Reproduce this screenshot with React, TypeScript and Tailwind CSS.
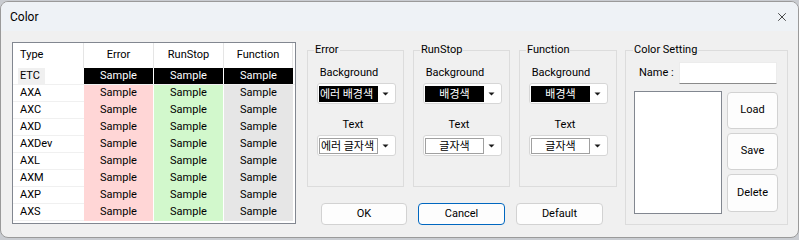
import { X } from 'lucide-react';

const types = ['AXA', 'AXC', 'AXD', 'AXDev', 'AXL', 'AXM', 'AXP', 'AXS'];

function Arrow() {
  return (
    <svg width="7" height="4" viewBox="0 0 7 4" className="shrink-0">
      <path d="M0.5 0.5 L6.5 0.5 L3.5 3.5 Z" fill="#1a1a1a" />
    </svg>
  );
}

function Combo({ text, dark, left }: { text: string; dark?: boolean; left?: boolean }) {
  return (
    <div className="ml-[9px] w-[79px] h-[21px] rounded-[3px] border border-[#d6d6d6] bg-white flex items-center pl-px">
      <div
        className={`w-[59px] h-[16px] flex items-center text-[11px] leading-none font-['Noto_Sans_CJK_KR',sans-serif] ${left ? 'justify-start pl-px' : 'justify-center'} ${dark ? 'bg-black text-white' : 'bg-white text-black border border-[#a0a0a0]'}`}
      >
        {text}
      </div>
      <div className="flex-1 flex justify-center pr-[2px]">
        <Arrow />
      </div>
    </div>
  );
}

function Group({ title, bg, fg, left, w }: { title: string; bg: string; fg: string; left?: boolean; w: string }) {
  return (
    <fieldset className={`${w} border border-[#dcdcdc] pb-[30px]`}>
      <legend className="ml-[6px] px-px leading-[16px]">{title}</legend>
      <div className="mt-[7px] w-[82px] text-center leading-[16px]">Background</div>
      <div className="mt-[2px]">
        <Combo text={bg} dark left={left} />
      </div>
      <div className="mt-[13px] w-[90px] text-center leading-[16px]">Text</div>
      <div className="mt-[2px]">
        <Combo text={fg} left={left} />
      </div>
    </fieldset>
  );
}

function Btn({ label, w, h, primary }: { label: string; w: string; h: string; primary?: boolean }) {
  return (
    <button className={`${w} ${h} rounded-[4px] bg-[#fdfdfd] border ${primary ? 'border-[#0067c0]' : 'border-[#d2d2d2]'} text-black`}>
      {label}
    </button>
  );
}

export default function App() {
  return (
    <div className="w-[799px] h-[240px] bg-[#c9ccd1] pt-px font-['Roboto',sans-serif] text-[11px] text-black">
      <div className="w-[799px] h-[237px] rounded-[8px] border border-[#9a9a9a] bg-[#f0f0f0] overflow-hidden flex flex-col">
        <div className="h-[29px] bg-[#eef2f6] flex items-center justify-between pl-[9px] pr-[9px]">
          <span className="text-[12px]">Color</span>
          <X className="w-[14px] h-[14px]" strokeWidth={1.2} />
        </div>

        <div className="flex pl-[11px] pt-[11px]">
          {/* grid */}
          <div className="w-[284px] h-[182px] border border-[#828790] bg-white">
            <div className="h-[25px] flex">
              <div className="w-[71px] pl-[7px] flex items-center border-r border-[#e5e5e5]">Type</div>
              <div className="w-[70px] flex items-center justify-center border-r border-[#e5e5e5]">Error</div>
              <div className="w-[70px] flex items-center justify-center border-r border-[#e5e5e5]">RunStop</div>
              <div className="w-[69px] flex items-center justify-center border-r border-[#e5e5e5]">Function</div>
            </div>
            <div className="h-[17px] flex border-b border-[#f0f0f0]">
              <div className="w-[71px] flex items-center">
                <span className="ml-[5px] pl-[2px] w-[27px] h-[16px] bg-[#f0f0f0] flex items-center">ETC</span>
              </div>
              <div className="w-[70px] bg-black text-white flex items-center justify-center border-r border-white">Sample</div>
              <div className="w-[70px] bg-black text-white flex items-center justify-center border-r border-white">Sample</div>
              <div className="w-[69px] bg-black text-white flex items-center justify-center">Sample</div>
            </div>
            {types.map(t => (
              <div key={t} className="h-[17px] flex">
                <div className="w-[71px] pl-[7px] flex items-center border-b border-[#f0f0f0]">{t}</div>
                <div className="w-[70px] bg-[#ffd6d6] flex items-center justify-center border-r border-white">Sample</div>
                <div className="w-[70px] bg-[#d2f8cc] flex items-center justify-center border-r border-white">Sample</div>
                <div className="w-[69px] bg-[#e6e6e6] flex items-center justify-center">Sample</div>
              </div>
            ))}
          </div>

          {/* color groups */}
          <div className="ml-[11px] flex flex-col">
            <div className="flex gap-[9px]">
              <Group title="Error" bg="에러 배경색" fg="에러 글자색" left w="w-[97px]" />
              <Group title="RunStop" bg="배경색" fg="글자색" w="w-[97px]" />
              <Group title="Function" bg="배경색" fg="글자색" w="w-[98px]" />
            </div>
            <div className="mt-[16px] ml-[14px] flex gap-[11px]">
              <Btn label="OK" w="w-[86px]" h="h-[22px]" />
              <Btn label="Cancel" w="w-[87px]" h="h-[22px]" primary />
              <Btn label="Default" w="w-[87px]" h="h-[22px]" />
            </div>
          </div>

          {/* color setting */}
          <fieldset className="ml-[8px] w-[163px] border border-[#dcdcdc] pb-[10px]">
            <legend className="ml-[7px] px-px leading-[16px]">Color Setting</legend>
            <div className="mt-[4px] flex items-center pl-[13px]">
              <span className="w-[40px]">Name :</span>
              <div className="w-[98px] h-[22px] bg-white border border-[#ececec] border-b-[#8a8a8a]" />
            </div>
            <div className="mt-[7px] ml-[8px] flex">
              <div className="w-[88px] h-[123px] border border-[#828790] bg-white" />
              <div className="ml-[5px] mt-px flex flex-col gap-[4px]">
                <Btn label="Load" w="w-[51px]" h="h-[37px]" />
                <Btn label="Save" w="w-[51px]" h="h-[37px]" />
                <Btn label="Delete" w="w-[51px]" h="h-[38px]" />
              </div>
            </div>
          </fieldset>
        </div>
      </div>
    </div>
  );
}
